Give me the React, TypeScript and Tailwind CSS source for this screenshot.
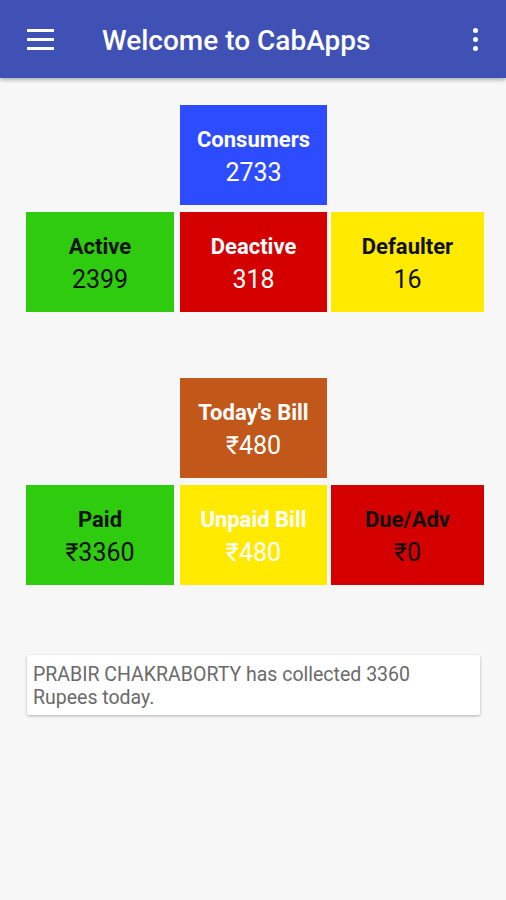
import React from "react";

const font = { fontFamily: "Roboto, 'Noto Sans', sans-serif" };

function Box({ label, value, bg, text, w }: { label: string; value: string; bg: string; text: string; w: string }) {
  return (
    <div className={`${bg} ${text} ${w} h-[100px] flex flex-col items-center pt-[22px]`}>
      <div className="text-[22px] font-bold leading-[26px]">{label}</div>
      <div className="text-[25px] leading-[30px] mt-[5px]">{value}</div>
    </div>
  );
}

export default function App() {
  return (
    <div style={font} className="w-[506px] h-[900px] bg-[#f7f7f7] flex flex-col">
      <div className="h-[78px] bg-[#3f51b5] flex items-center shadow-[0_2px_4px_rgba(0,0,0,0.3)] z-10">
        <div className="w-[27px] h-[21px] ml-[27px] mt-[1px] flex flex-col justify-between">
          <div className="h-[3px] bg-white" />
          <div className="h-[3px] bg-white" />
          <div className="h-[3px] bg-white" />
        </div>
        <div className="ml-[48px] mt-[4px] text-white text-[28px] font-medium leading-none">Welcome to CabApps</div>
        <div className="ml-auto mr-[28px] mt-[1px] flex flex-col gap-[4px]">
          <div className="w-[5px] h-[5px] rounded-full bg-white" />
          <div className="w-[5px] h-[5px] rounded-full bg-white" />
          <div className="w-[5px] h-[5px] rounded-full bg-white" />
        </div>
      </div>

      <div className="pl-[26px] mt-[27px] flex flex-col gap-[7px]">
        <div className="pl-[154px]">
          <Box label="Consumers" value="2733" bg="bg-[#2d4cff]" text="text-white" w="w-[147px]" />
        </div>
        <div className="flex">
          <Box label="Active" value="2399" bg="bg-[#2ecb0e]" text="text-[#111]" w="w-[148px]" />
          <div className="w-[6px]" />
          <Box label="Deactive" value="318" bg="bg-[#d40000]" text="text-white" w="w-[147px]" />
          <div className="w-[4px]" />
          <Box label="Defaulter" value="16" bg="bg-[#ffea00]" text="text-[#111]" w="w-[153px]" />
        </div>
      </div>

      <div className="pl-[26px] mt-[66px] flex flex-col gap-[7px]">
        <div className="pl-[154px]">
          <Box label="Today's Bill" value="₹480" bg="bg-[#c2571a]" text="text-white" w="w-[147px]" />
        </div>
        <div className="flex">
          <Box label="Paid" value="₹3360" bg="bg-[#2ecb0e]" text="text-[#111]" w="w-[148px]" />
          <div className="w-[6px]" />
          <Box label="Unpaid Bill" value="₹480" bg="bg-[#ffea00]" text="text-white" w="w-[147px]" />
          <div className="w-[4px]" />
          <Box label="Due/Adv" value="₹0" bg="bg-[#d40000]" text="text-[#111]" w="w-[153px]" />
        </div>
      </div>

      <div className="ml-[27px] mt-[70px] w-[453px] h-[60px] bg-white rounded-[2px] shadow-[0_1px_3px_rgba(0,0,0,0.3)] pl-[6px] pr-[14px] pt-[8px] text-[19.5px] leading-[23px] text-[#6a6a6a]">
        PRABIR CHAKRABORTY has collected 3360 Rupees today.
      </div>
    </div>
  );
}
